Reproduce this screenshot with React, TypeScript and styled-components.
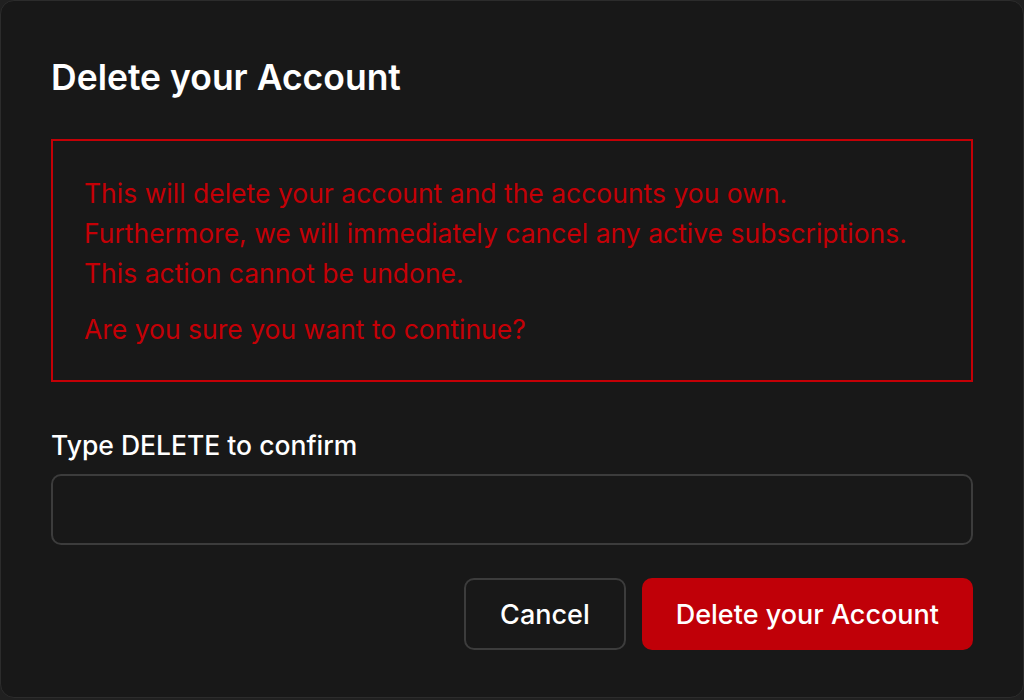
import styled, { createGlobalStyle } from "styled-components";

const GlobalStyle = createGlobalStyle`
  html, body {
    margin: 0;
    padding: 0;
    background: #202020;
  }
  body {
    font-family: Inter, "Noto Sans", sans-serif;
  }
`;

function App() {
  return (
    <>
      <GlobalStyle />
      <StyledModal>
        <StyledTitle>Delete your Account</StyledTitle>
        <StyledWarning>
          <p>
            This will delete your account and the accounts you own.
            <br />
            Furthermore, we will immediately cancel any active subscriptions.
            <br />
            This action cannot be undone.
          </p>
          <p>Are you sure you want to continue?</p>
        </StyledWarning>
        <StyledField>
          <StyledLabel htmlFor="confirm">Type DELETE to confirm</StyledLabel>
          <StyledInput id="confirm" type="text" />
        </StyledField>
        <StyledActions>
          <StyledButton>Cancel</StyledButton>
          <StyledButton danger>Delete your Account</StyledButton>
        </StyledActions>
      </StyledModal>
    </>
  );
}
export default App;

const StyledModal = styled.div`
  box-sizing: border-box;
  height: 698px;
  padding: 54px 50px 0 50px;
  background: #181818;
  border: 1px solid #2c2c2c;
  border-radius: 14px;
  color: #fff;
`;

const StyledTitle = styled.h2`
  margin: 0;
  font-size: 35.5px;
  font-weight: 600;
  line-height: 46px;
`;

const StyledWarning = styled.div`
  margin-top: 38px;
  padding: 32px 31px 31px 31px;
  border: 2px solid #c40006;
  color: #c40006;
  font-size: 26.5px;
  line-height: 40px;

  p {
    margin: 0;
  }
  p + p {
    margin-top: 16px;
  }
`;

const StyledField = styled.div`
  display: flex;
  flex-direction: column;
  gap: 12px;
  margin-top: 46px;
`;

const StyledLabel = styled.label`
  font-size: 26.5px;
  font-weight: 500;
  line-height: 34px;
`;

const StyledInput = styled.input`
  box-sizing: border-box;
  height: 71px;
  padding: 0 20px;
  background: transparent;
  border: 2px solid #3c3c3c;
  border-radius: 10px;
  color: #fff;
  font: inherit;
  font-size: 26px;
  outline: none;
`;

const StyledActions = styled.div`
  display: flex;
  justify-content: flex-end;
  gap: 16px;
  margin-top: 33px;
`;

const StyledButton = styled.button<{ danger?: boolean }>`
  box-sizing: border-box;
  height: 72px;
  padding: 0 ${(p) => (p.danger ? "32px" : "34px")};
  border-radius: 10px;
  border: 2px solid ${(p) => (p.danger ? "#c00008" : "#3c3c3c")};
  background: ${(p) => (p.danger ? "#c00008" : "transparent")};
  color: #fff;
  font-family: Inter, "Noto Sans", sans-serif;
  font-size: 27px;
  font-weight: 500;
  cursor: pointer;
`;
